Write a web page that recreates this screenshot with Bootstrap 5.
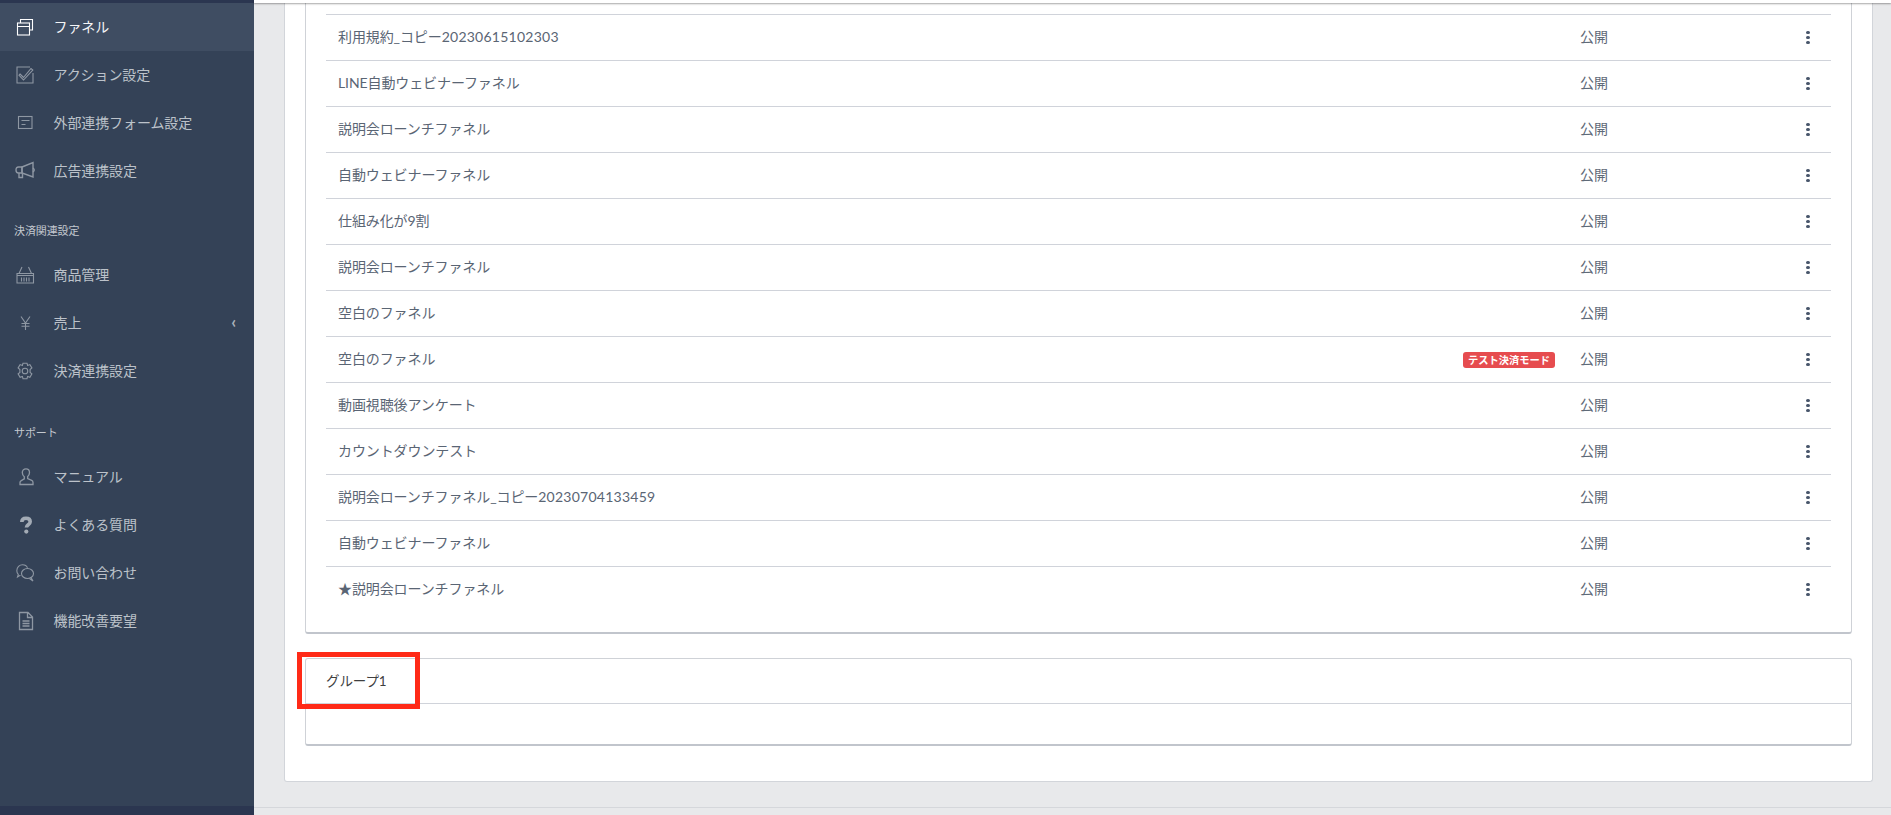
<!DOCTYPE html>
<html lang="ja">
<head>
<meta charset="utf-8">
<title>ファネル</title>
<link href="https://cdn.jsdelivr.net/npm/bootstrap@5.3.0/dist/css/bootstrap.min.css" rel="stylesheet">
<style>
html,body{height:100%;overflow:hidden}
body{font-family:Lato,"Noto Sans CJK JP",sans-serif;font-size:14px;letter-spacing:-.1px;background:#e8e9eb;color:#5a6574}
.shell{height:815px}
.side{width:254px;flex:none;background:#344257;color:#bcc2ca;border-top:3px solid #2b3650;border-bottom:9px solid #2b3650}
.side-item{height:48px;padding-left:16px;color:#bcc2ca;text-decoration:none}
.side-text{position:relative;top:-1px}
.side-item.on{background:#3f4d62;color:#f4f5f7}
.side-item svg{width:18px;height:18px;flex:none;fill:none;stroke:#8e97a3;stroke-width:1.1;margin-right:19.500px;overflow:visible}
.side-item.on svg{stroke:#fff}
.side-label{font-size:11px;line-height:16px;padding:28px 0 12px 14px;color:#c3c8cf}
.side-label.second{padding-top:30px}
.chev{font-size:17px;font-weight:700;margin-right:18px;line-height:1;color:#aab1ba;position:relative;top:-2px}
.main-area{min-width:0}
.topstrip{height:3px;background:#fff;box-shadow:0 1px 2px rgba(0,0,0,.35);flex:none;position:relative}
.pane{background:#fff;margin:0 18px 0 30px;padding:0 20px 35px;border:solid #d2d5da;border-width:0 1px 1px 1px;border-radius:0 0 3px 3px}
.box{border:1px solid #cfd2d7;border-bottom:2px solid #c1c5cc;border-radius:3px;background:#fff}
.box.first{border-top:0;border-radius:0 0 3px 3px;padding:11px 20px 20px}
.box.group{margin-top:24px}
.fn-row{height:46px;border-top:1px solid #d0d3da;padding-left:12px;padding-bottom:2px}
.fn-name{flex:1 1 auto}
.nums{letter-spacing:.25px}
.fn-flag{background:#e64c4f;color:#fff;font-size:10.250px;font-weight:700;letter-spacing:0;line-height:16px;height:16px;padding:0 5px;border-radius:3px;margin-right:25px;position:relative;top:1px}
.fn-state{width:226px;flex:none;color:#5f6a78}
.fn-dots{width:4px;flex:none;margin-right:21px;display:flex;flex-direction:column;gap:1.6px;position:relative;top:1px}
.fn-dots i{width:4px;height:3.6px;border-radius:50%;background:#48566b;display:block}
.group-head{height:45px;padding-left:20px;border-bottom:1px solid #d0d3da;color:#3f3f3f;font-size:13.500px}
.group-body{height:40px}
.pagefoot{margin-top:25px;border-top:1px solid #d5d7db;flex:1}
.mark-red{position:absolute;left:297px;top:652px;width:123px;height:57px;border:5px solid #ff2a17;pointer-events:none}
</style>
</head>
<body>
<div class="shell d-flex">
  <nav class="side d-flex flex-column">
    <a class="side-item on d-flex align-items-center" href="#"><svg viewBox="0 0 18 18"><rect x="1.500" y="5" width="12" height="12"/><path d="M1.500 8.500h12M4.500 5V1.500h12v10.500h-3"/></svg><span class="side-text">ファネル</span></a>
    <a class="side-item d-flex align-items-center" href="#"><svg viewBox="0 0 18 18"><path d="M17 7v10H1V1h13"/><path d="M4 8l3.500 3.500L15 2.500l1.800 1.500L7.500 14 3 9.300z"/></svg><span class="side-text">アクション設定</span></a>
    <a class="side-item d-flex align-items-center" href="#"><svg viewBox="0 0 18 18"><rect x="2.500" y="2.500" width="13.500" height="12"/><path d="M5.500 6.500h8M5.500 10.500h4"/></svg><span class="side-text">外部連携フォーム設定</span></a>
    <a class="side-item d-flex align-items-center" href="#"><svg viewBox="0 0 18 18" style="stroke-width:1.400"><path d="M6 5L17 .5V15L6 11z"/><path d="M6 5H2.500Q0 5 0 8t2.500 3H6zM3 11v4.500h3.500V11.500M17 6q2.500 2 0 4"/></svg><span class="side-text">広告連携設定</span></a>
    <div class="side-label">決済関連設定</div>
    <a class="side-item d-flex align-items-center" href="#"><svg viewBox="0 0 18 18"><path d="M1 7.500h16.500V17H1zM1 9.500h16.500M3 7.500L6 1M15.500 7.500L12.500 1M5.500 11.500v4M8 11.500v4M10.500 11.500v4M13 11.500v4"/></svg><span class="side-text">商品管理</span></a>
    <a class="side-item d-flex align-items-center" href="#"><svg viewBox="0 0 18 18"><path d="M5 2.500L9.500 9 14 2.500M9.500 9v7M5.500 9.500h8M5.500 12.300h8"/></svg><span class="side-text flex-grow-1">売上</span><span class="chev">‹</span></a>
    <a class="side-item d-flex align-items-center" href="#"><svg viewBox="0 0 18 18"><path d="M7 1.200h4l.6 2.300 2.300-.9 2 3.400-1.800 1.500v2.900l1.800 1.500-2 3.400-2.300-.9-.6 2.300H7l-.6-2.300-2.300.9-2-3.400 1.800-1.500V7.500L2.100 6l2-3.400 2.300.9z"/><circle cx="9" cy="9" r="2.800"/></svg><span class="side-text">決済連携設定</span></a>
    <div class="side-label second">サポート</div>
    <a class="side-item d-flex align-items-center" href="#"><svg viewBox="0 0 18 18" style="stroke-width:1.300"><path d="M10 .8c2.300 0 3.500 1.700 3.500 3.800 0 1.800-.8 3.200-1.800 4v2l4 1.800c.8.400 1.300 1 1.300 2v2.100H4V14.600c0-1 .5-1.600 1.300-2l3-1.800v-2c-1-.8-2-2.400-2-4.200C6.300 2.500 7.700.8 10 .8z"/></svg><span class="side-text">マニュアル</span></a>
    <a class="side-item d-flex align-items-center" href="#"><svg viewBox="0 0 18 18"><path d="M5.800 6C5.800 3.600 7.500 2.200 10 2.200s4.200 1.300 4.200 3.500c0 3-3.800 3-3.800 5.800" style="stroke:#a3abb5;stroke-width:3.600"/><circle cx="10.300" cy="15.600" r="2.100" style="fill:#a3abb5;stroke:none"/></svg><span class="side-text">よくある質問</span></a>
    <a class="side-item d-flex align-items-center" href="#"><svg viewBox="0 0 18 18"><path d="M4.500 11.500H3.800L1.500 13l.8-2.700C1.300 9.300.8 8 .8 6.800.8 3.200 3.500.8 6.500.8c2.300 0 4.300 1.200 5 3"/><ellipse cx="11.500" cy="9.500" rx="6" ry="5"/><path d="M15 13.500l2 3.500-3.500-2.500"/></svg><span class="side-text">お問い合わせ</span></a>
    <a class="side-item d-flex align-items-center" href="#"><svg viewBox="0 0 18 18" style="stroke-width:1.300"><path d="M3.500.5h8.500l4.500 4.500v12.500h-13zM11.500.5V5.500h5M6.500 9h7M6.500 11.500h7M6.500 14h7"/></svg><span class="side-text">機能改善要望</span></a>
  </nav>
  <div class="main-area flex-grow-1 d-flex flex-column">
    <div class="topstrip"></div>
    <div class="pane">
      <div class="box first">
        <div class="fn-row d-flex align-items-center"><span class="fn-name">利用規約_コピー<span class="nums">20230615102303</span></span><span class="fn-state">公開</span><span class="fn-dots"><i></i><i></i><i></i></span></div>
        <div class="fn-row d-flex align-items-center"><span class="fn-name">LINE自動ウェビナーファネル</span><span class="fn-state">公開</span><span class="fn-dots"><i></i><i></i><i></i></span></div>
        <div class="fn-row d-flex align-items-center"><span class="fn-name">説明会ローンチファネル</span><span class="fn-state">公開</span><span class="fn-dots"><i></i><i></i><i></i></span></div>
        <div class="fn-row d-flex align-items-center"><span class="fn-name">自動ウェビナーファネル</span><span class="fn-state">公開</span><span class="fn-dots"><i></i><i></i><i></i></span></div>
        <div class="fn-row d-flex align-items-center"><span class="fn-name">仕組み化が9割</span><span class="fn-state">公開</span><span class="fn-dots"><i></i><i></i><i></i></span></div>
        <div class="fn-row d-flex align-items-center"><span class="fn-name">説明会ローンチファネル</span><span class="fn-state">公開</span><span class="fn-dots"><i></i><i></i><i></i></span></div>
        <div class="fn-row d-flex align-items-center"><span class="fn-name">空白のファネル</span><span class="fn-state">公開</span><span class="fn-dots"><i></i><i></i><i></i></span></div>
        <div class="fn-row d-flex align-items-center"><span class="fn-name">空白のファネル</span><span class="fn-flag">テスト決済モード</span><span class="fn-state">公開</span><span class="fn-dots"><i></i><i></i><i></i></span></div>
        <div class="fn-row d-flex align-items-center"><span class="fn-name">動画視聴後アンケート</span><span class="fn-state">公開</span><span class="fn-dots"><i></i><i></i><i></i></span></div>
        <div class="fn-row d-flex align-items-center"><span class="fn-name">カウントダウンテスト</span><span class="fn-state">公開</span><span class="fn-dots"><i></i><i></i><i></i></span></div>
        <div class="fn-row d-flex align-items-center"><span class="fn-name">説明会ローンチファネル_コピー<span class="nums">20230704133459</span></span><span class="fn-state">公開</span><span class="fn-dots"><i></i><i></i><i></i></span></div>
        <div class="fn-row d-flex align-items-center"><span class="fn-name">自動ウェビナーファネル</span><span class="fn-state">公開</span><span class="fn-dots"><i></i><i></i><i></i></span></div>
        <div class="fn-row d-flex align-items-center"><span class="fn-name">★説明会ローンチファネル</span><span class="fn-state">公開</span><span class="fn-dots"><i></i><i></i><i></i></span></div>
      </div>
      <div class="box group">
        <div class="group-head d-flex align-items-center">グループ1</div>
        <div class="group-body"></div>
      </div>
    </div>
    <div class="pagefoot"></div>
  </div>
</div>
<div class="mark-red"></div>
<script src="https://cdn.jsdelivr.net/npm/bootstrap@5.3.0/dist/js/bootstrap.bundle.min.js"></script>
</body>
</html>
